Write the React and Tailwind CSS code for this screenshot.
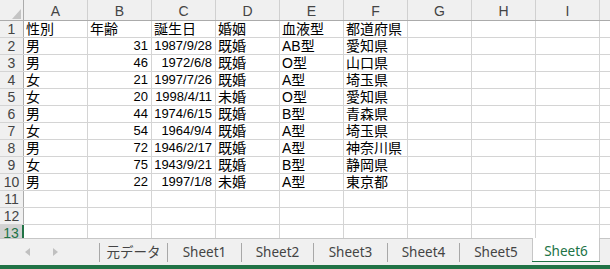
import React from "react";

const COLS = ["A", "B", "C", "D", "E", "F", "G", "H", "I"];

const DATA = [
  ["性別", "年齢", "誕生日", "婚姻", "血液型", "都道府県"],
  ["男", "31", "1987/9/28", "既婚", "AB型", "愛知県"],
  ["男", "46", "1972/6/8", "既婚", "O型", "山口県"],
  ["女", "21", "1997/7/26", "既婚", "A型", "埼玉県"],
  ["女", "20", "1998/4/11", "未婚", "O型", "愛知県"],
  ["男", "44", "1974/6/15", "既婚", "B型", "青森県"],
  ["女", "54", "1964/9/4", "既婚", "A型", "埼玉県"],
  ["男", "72", "1946/2/17", "既婚", "A型", "神奈川県"],
  ["女", "75", "1943/9/21", "既婚", "B型", "静岡県"],
  ["男", "22", "1997/1/8", "未婚", "A型", "東京都"],
];

function Cell({ value, rowIdx, colIdx }) {
  const numeric = rowIdx > 0 && (colIdx === 1 || colIdx === 2);
  return (
    <div
      className={
        "w-[64px] shrink-0 h-full border-r border-[#d4d4d4] flex items-center overflow-hidden whitespace-nowrap " +
        (numeric ? "justify-end pr-[3px] text-[13px]" : "justify-start pl-[2px] text-[14px]")
      }
    >
      {value || ""}
    </div>
  );
}

function Tab({ label, width }) {
  return (
    <div className={"flex h-full border-t border-[#c6c6c6] " + width}>
      <div className="w-px h-[19px] mt-[4px] bg-[#a8a8a8]" />
      <div className="flex-1 flex items-center justify-center text-[13.5px] text-[#444444] pt-[1px]">
        {label}
      </div>
    </div>
  );
}

export default function App() {
  const rows = Array.from({ length: 13 }, (_, i) => i);
  return (
    <div className="w-[610px] h-[269px] overflow-hidden bg-white flex flex-col text-black">
      <div className="h-[238px] overflow-hidden flex flex-col font-['Liberation_Sans','Noto_Sans_CJK_JP',sans-serif]">
        {/* Column header */}
        <div className="h-[21px] shrink-0 flex bg-[#f0f0f0] border-b border-[#ababab]">
          <div className="w-[24px] shrink-0 h-full border-r border-[#ababab] relative">
            <svg className="absolute left-[12px] top-[9px]" width="9" height="10" viewBox="0 0 9 10">
              <polygon points="9,0 9,10 0,10" fill="#c4c4c4" />
            </svg>
          </div>
          {COLS.map((c) => (
            <div
              key={c}
              className="w-[64px] shrink-0 h-full border-r border-[#d0d0d0] flex items-center justify-center text-[14px] text-[#444444] pt-[2px]"
            >
              {c}
            </div>
          ))}
          <div className="flex-1" />
        </div>
        {/* Rows */}
        {rows.map((r) => {
          const active = r === 12;
          const data = DATA[r] || [];
          return (
            <div key={r} className="h-[17px] shrink-0 flex border-b border-[#d4d4d4]">
              <div
                className={
                  "w-[24px] shrink-0 h-full flex items-center justify-center text-[14px] " +
                  (active
                    ? "bg-[#d2d2d2] text-[#217346] border-r-2 border-[#217346]"
                    : "bg-[#f0f0f0] text-[#444444] border-r border-[#ababab]")
                }
              >
                {r + 1}
              </div>
              {COLS.map((c, ci) => (
                <Cell key={c} value={data[ci]} rowIdx={r} colIdx={ci} />
              ))}
              <div className="flex-1" />
            </div>
          );
        })}
      </div>

      {/* Sheet tab bar */}
      <div className="h-[27px] shrink-0 flex bg-[#f0f0f0] font-['Noto_Sans','Noto_Sans_CJK_JP',sans-serif]">
        <div className="w-[99px] shrink-0 h-full border-t border-[#c6c6c6] flex items-center">
          <svg className="ml-[25px]" width="5" height="8" viewBox="0 0 5 8">
            <polygon points="5,0 5,8 0,4" fill="#c0c0c0" />
          </svg>
          <svg className="ml-[23px]" width="5" height="8" viewBox="0 0 5 8">
            <polygon points="0,0 0,8 5,4" fill="#c0c0c0" />
          </svg>
        </div>
        <Tab label="元データ" width="w-[68px]" />
        <Tab label="Sheet1" width="w-[74px]" />
        <Tab label="Sheet2" width="w-[72px]" />
        <Tab label="Sheet3" width="w-[74px]" />
        <Tab label="Sheet4" width="w-[72px]" />
        <Tab label="Sheet5" width="w-[73px]" />
        <div className="w-[68px] shrink-0 h-[24px] bg-white border-x border-[#c6c6c6] flex flex-col">
          <div className="flex-1 flex items-center justify-center text-[13.5px] text-[#217346] pt-[3px]">
            Sheet6
          </div>
          <div className="h-[2px] bg-[#217346] -mx-px" />
        </div>
        <div className="flex-1 h-full border-t border-[#c6c6c6]" />
      </div>
      <div className="h-[4px] shrink-0 bg-[#217346]" />
    </div>
  );
}
